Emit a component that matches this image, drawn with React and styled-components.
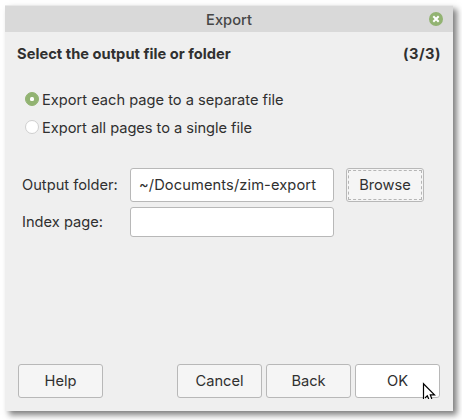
import React from 'react';
import styled, { createGlobalStyle } from 'styled-components';

const GlobalStyle = createGlobalStyle`
  * { box-sizing: border-box; }
  body {
    margin: 0;
    background: #fff;
    color: #303030;
    font: 400 14.67px/20px Inter, "Noto Sans", sans-serif;
    overflow: hidden;
  }
`;

const Desktop = styled.div`
  height: 420px;
  padding: 5px 0 0 5px;
  overflow: hidden;
`;

const Dialog = styled.div`
  position: relative;
  display: flex;
  flex-direction: column;
  width: 448px;
  height: 406px;
  background: #efefef;
  box-shadow: 4px 4px 6px rgba(0, 0, 0, 0.5);
`;

const TitleBar = styled.header`
  display: grid;
  grid-template-columns: 40px 1fr 40px;
  align-items: center;
  height: 27px;
  padding-top: 1px;
  border-top: 1px solid #e9e9e9;
  background: #d9d9d9;
`;

const Title = styled.div`
  grid-column: 2;
  text-align: center;
  font-weight: 500;
  color: #464646;
`;

const CloseButton = styled.button`
  display: block;
  width: 14px;
  height: 14px;
  margin: -2px 0 0 16px;
  padding: 0;
  border: 0;
  border-radius: 50%;
  background: #92b372;
  svg { display: block; }
`;

const Heading = styled.div`
  display: flex;
  justify-content: space-between;
  margin: 12px 12px 0 12px;
  font-weight: 700;
  letter-spacing: 0.03px;
`;

const PageCount = styled.span`
  letter-spacing: 0.45px;
`;

const Options = styled.div`
  display: flex;
  flex-direction: column;
  gap: 8px;
  margin: 26px 0 0 20px;
  letter-spacing: -0.01px;
`;

const Option = styled.label`
  display: flex;
  align-items: center;
  gap: 3px;
  height: 20px;
  letter-spacing: ${(p) => (p.$tight ? '-0.05px' : 'inherit')};
`;

const Radio = styled.span`
  display: grid;
  place-items: center;
  width: 14px;
  height: 14px;
  margin-top: -2px;
  border-radius: 50%;
  border: 1px solid ${(p) => (p.$checked ? '#92b372' : '#cfcfcf')};
  background: ${(p) => (p.$checked ? '#92b372' : '#fff')};
  &::after {
    content: '';
    width: 4px;
    height: 4px;
    border-radius: 1.5px;
    background: #fff;
  }
`;

const Fields = styled.div`
  display: grid;
  grid-template-columns: 108px 204px 78px;
  grid-template-rows: 34px 30px;
  row-gap: 5px;
  column-gap: 0;
  margin: 30px 0 0 17px;
  align-items: center;
`;

const Entry = styled.div`
  height: 100%;
  padding: 6px 8px;
  border: 1px solid #b8b8b8;
  border-radius: 3px;
  background: #fff;
  letter-spacing: 0.1px;
`;

const FieldRow = styled.div`
  display: contents;
`;

const Button = styled.button`
  width: ${(p) => p.$width || 85}px;
  height: 34px;
  padding: 0;
  border: 1px solid #b8b8b8;
  border-radius: 3px;
  background: ${(p) => (p.$hot ? '#fff' : '#f5f5f5')};
  color: inherit;
  font: inherit;
`;

const BrowseButton = styled(Button)`
  margin-left: 12px;
  padding: 1px;
`;

const FocusRing = styled.span`
  display: grid;
  place-items: center;
  height: 100%;
  border: 1px dashed #b5b5b5;
  border-radius: 1px;
`;

const Actions = styled.footer`
  display: flex;
  gap: 4px;
  margin: auto 13px 13px 13px;
`;

const Spacer = styled.div`
  flex: 1;
`;

const Pointer = styled.svg`
  position: absolute;
  left: 417px;
  top: 377px;
  pointer-events: none;
`;

export default function App() {
  return (
    <Desktop>
      <GlobalStyle />
      <Dialog>
        <TitleBar>
          <Title>Export</Title>
          <CloseButton aria-label="Close">
            <svg width="14" height="14" viewBox="0 0 14 14">
              <path d="M4.3 4.3l5.4 5.4M9.7 4.3l-5.4 5.4" stroke="#fff" strokeWidth="2" />
            </svg>
          </CloseButton>
        </TitleBar>
        <Heading>
          <span>Select the output file or folder</span>
          <PageCount>(3/3)</PageCount>
        </Heading>
        <Options>
          <Option><Radio $checked />Export each page to a separate file</Option>
          <Option $tight><Radio />Export all pages to a single file</Option>
        </Options>
        <Fields>
          <FieldRow>
            <span>Output folder:</span>
            <Entry>~/Documents/zim-export</Entry>
            <BrowseButton $width={78}><FocusRing>Browse</FocusRing></BrowseButton>
          </FieldRow>
          <FieldRow>
            <span>Index page:</span>
            <Entry />
          </FieldRow>
        </Fields>
        <Actions>
          <Button>Help</Button>
          <Spacer />
          <Button>Cancel</Button>
          <Button>Back</Button>
          <Button $hot>OK</Button>
        </Actions>
        <Pointer width="15" height="17" viewBox="0 0 15 17">
          <path d="M1.5 1.5V17H4l1.5-2.5L7 17h2.5l-1-3.5H13z" fill="#fff" />
          <path d="M1.5 17V1.8L12.5 12.8H8.3L9.8 17M3 16l2.3-2.2L6.8 17" fill="none" stroke="#000" strokeWidth="1.2" />
        </Pointer>
      </Dialog>
    </Desktop>
  );
}
